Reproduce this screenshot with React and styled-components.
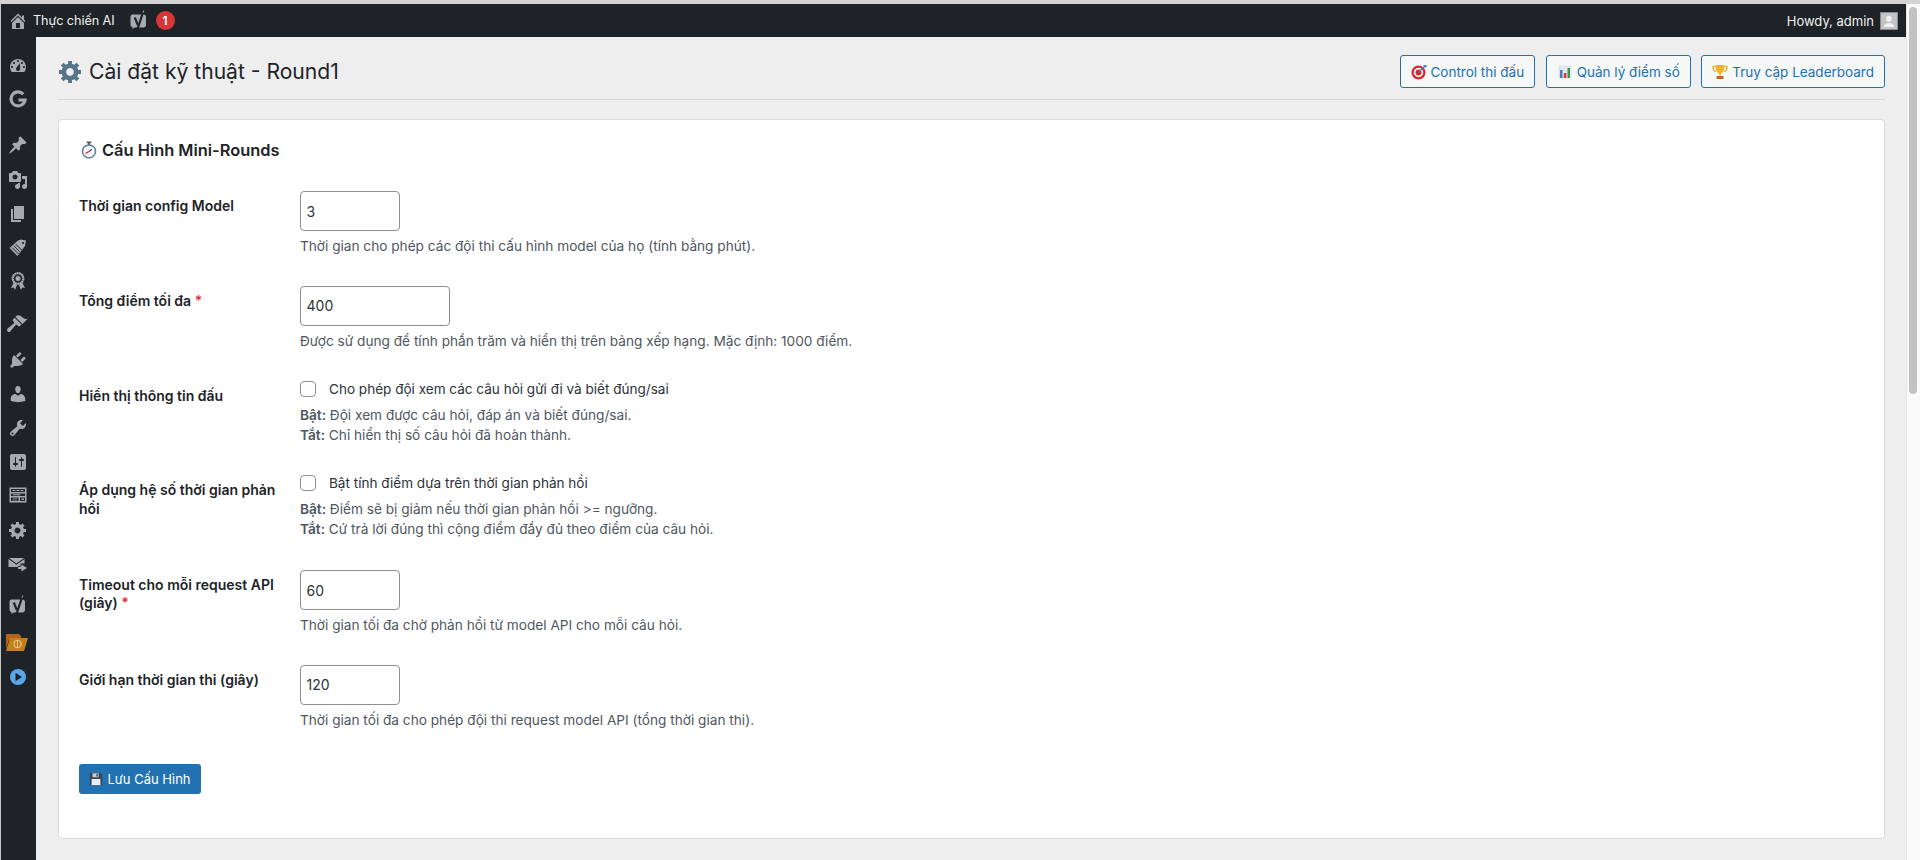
import React from 'react';
import styled, { createGlobalStyle } from 'styled-components';

const Global = createGlobalStyle`
  html, body { margin: 0; padding: 0; height: 100%; overflow: hidden; background: #eee; }
  body { font-family: Inter, "Noto Sans", sans-serif; color: #1d2327; }
  * { box-sizing: border-box; }
`;

const Shell = styled.div`
  width: 1920px; height: 860px; display: flex; overflow: hidden;
  background: #eeeeee; border-top: 4px solid #d4d4d4; border-left: 1px solid #c8c8c8;
`;
const Page = styled.div`flex: 1; min-width: 0; display: flex; flex-direction: column;`;
const AdminBar = styled.header`
  height: 33px; flex: none; background: #1d2327; color: #f0f0f1; display: flex; align-items: center;
  font-size: 13px; padding: 0 8px 0 7px;
`;
const BarLink = styled.span`display: flex; align-items: center; gap: 5px; font-size: 12.7px; letter-spacing: -0.1px;`;
const Yoast = styled.span`display: flex; align-items: center; margin-left: 14px; gap: 7px;`;
const Badge = styled.span`
  width: 19px; height: 19px; border-radius: 50%; background: #d63638; color: #fff; font-size: 12px; font-weight: 600;
  display: flex; align-items: center; justify-content: center;
`;
const Howdy = styled.span`margin-left: auto; display: flex; align-items: center; gap: 6px;`;
const Avatar = styled.span`
  width: 18px; height: 18px; background: #c3c4c7; border: 1px solid #888; display: block; overflow: hidden;
`;
const Body = styled.div`flex: 1; display: flex; min-height: 0;`;
const Side = styled.nav`
  width: 35px; flex: none; background: #1d2327; display: flex; flex-direction: column; align-items: center; padding-top: 19px;
`;
const SideIcon = styled.span`
  display: flex; width: 20px; height: 20px; align-items: center; justify-content: center; color: #a7aaad;
  margin-top: ${p => p.$gap}px;
  margin-left: -1px;
  svg { display: block; width: 20px; height: 20px; fill: currentColor; overflow: visible; }
`;
const Content = styled.main`flex: 1; min-width: 0; padding: 0 21px 0 22px;`;
const Head = styled.div`
  display: flex; align-items: center; height: 63px; padding-top: 7px; border-bottom: 1px solid #d5d6d8;
`;
const Title = styled.h1`
  margin: 0; font-size: 21.1px; font-weight: 400; line-height: 30px; display: flex; align-items: center; gap: 6px; color: #1d2327;
  svg { width: 26px; height: 26px; margin-left: -1px; }
`;
const Actions = styled.div`margin-left: auto; display: flex; gap: 10.5px;`;
const LinkButton = styled.a`
  height: 33px; padding: 0 10px 0 10px; display: flex; align-items: center; gap: 4px; font-size: 13.5px; color: #2271b1;
  border: 1px solid #2271b1; border-radius: 3px; background: #f6f7f7;
  svg { width: 16px; height: 16px; }
`;
const Card = styled.section`
  margin-top: 19px; height: 720px; background: #fff; border: 1px solid #dcdcde; border-radius: 4px;
  padding: 19px 20px 0 20px;
`;
const CardTitle = styled.h2`
  margin: 0 0 15px; font-size: 16.4px; font-weight: 600; line-height: 22px; display: flex; align-items: center; gap: 4px; color: #1d2327;
  padding-left: 1px; height: 22px;
  svg { width: 18px; height: 18px; }
`;
const Row = styled.div`
  display: grid; grid-template-columns: 221px 1fr; height: 94.75px; padding-top: 15px;
`;
const Label = styled.label`
  display: block; padding: 6px 10px 0 0; font-size: 14px; font-weight: 600; line-height: 18.4px; color: #1d2327;
`;
const Req = styled.span`color: #d63638;`;
const Input = styled.div`
  width: ${p => p.$w}px; height: 40px; border: 1px solid #8c8f94; border-radius: 4px; background: #fff;
  display: flex; align-items: center; padding: 0 5.5px; font-size: 14px; color: #2c3338;
`;
const Desc = styled.p`
  margin: ${p => p.$mt || 5}px 0 0; font-size: 13.65px; line-height: 20px; color: #50575e;
  strong { font-weight: 600; }
`;
const CheckRow = styled.div`display: flex; align-items: center; gap: 13px; font-size: 13.55px; line-height: 20px; height: 20px; color: #2c3338; margin-top: -2px;`;
const Check = styled.span`width: 16px; height: 16px; border: 1px solid #8c8f94; border-radius: 4px; background: #fff; display: block; flex: none;`;
const Save = styled.a`
  margin-top: 19px; height: 30px; width: 122px; background: #2271b1; color: #fff; border-radius: 3px; font-size: 13px;
  display: flex; align-items: center; justify-content: center; gap: 4px;
  svg { width: 14px; height: 14px; }
`;
const Scroll = styled.aside`
  width: 14px; flex: none; background: #fafafa; border-left: 1px solid #e6e6e6; padding: 3px 3px 0 2px;
`;
const Thumb = styled.div`height: 387px; border-radius: 5px; background: #c2c2c2;`;

const paths = {
  dash: 'M3.76 16h12.48c1.1-1.37 1.76-3.11 1.76-5 0-4.42-3.58-8-8-8s-8 3.58-8 8c0 1.89.66 3.63 1.76 5zM10 4c.55 0 1 .45 1 1s-.45 1-1 1-1-.45-1-1 .45-1 1-1zM6 6c.55 0 1 .45 1 1s-.45 1-1 1-1-.45-1-1 .45-1 1-1zm8 0c.55 0 1 .45 1 1s-.45 1-1 1-1-.45-1-1 .45-1 1-1zm-5.37 5.55L12 7v6c0 1.1-.9 2-2 2s-2-.9-2-2c0-.57.24-1.08.63-1.45zM4 10c.55 0 1 .45 1 1s-.45 1-1 1-1-.45-1-1 .45-1 1-1zm12 0c.55 0 1 .45 1 1s-.45 1-1 1-1-.45-1-1 .45-1 1-1z',
  pin: 'M10.44 3.02l1.82-1.82 6.36 6.35-1.83 1.82c-1.05-.68-2.48-.57-3.41.36l-.75.75c-.92.93-1.04 2.35-.35 3.41l-1.83 1.82-2.41-2.41-2.8 2.79c-.42.42-3.38 2.71-3.8 2.29s1.86-3.39 2.28-3.81l2.79-2.79L4.1 9.36l1.83-1.82c1.05.69 2.48.57 3.4-.36l.75-.75c.93-.92 1.05-2.35.36-3.41z',
  media: 'M13 11V4c0-.55-.45-1-1-1h-1.67L9 1H5L3.67 3H2c-.55 0-1 .45-1 1v7c0 .55.45 1 1 1h10c.55 0 1-.45 1-1zM7 4.5c1.38 0 2.5 1.12 2.5 2.5S8.38 9.5 7 9.5 4.5 8.38 4.5 7 5.62 4.5 7 4.5zM14 6h5v10.5c0 1.38-1.12 2.5-2.5 2.5S14 17.88 14 16.5s1.12-2.5 2.5-2.5c.17 0 .34.02.5.05V9h-3V6zm-4 8.05V13h2v3.5c0 1.38-1.12 2.5-2.5 2.5S7 17.88 7 16.5 8.12 14 9.5 14c.17 0 .34.02.5.05z',
  page: 'M6 15V2h10v13H6zm-1 1h8v2H3V5h2v11z',
  brush: 'M14.48 11.06L7.41 3.99l1.5-1.5c.5-.56 2.3-.47 3.51.32 1.21.8 1.43 1.28 2.91 2.1 1.18.64 2.45 1.26 4.45.85zm-.71.71L6.7 4.7 4.93 6.47c-.39.39-.39 1.02 0 1.41l1.06 1.06c.39.39.39 1.03 0 1.42-.6.6-6.4 5.31-6.4 5.31-.76.76-.76 2 0 2.76.75.76 1.99.76 2.76 0 0 0 4.7-5.8 5.31-6.41.39-.39 1.02-.39 1.41 0l1.06 1.06c.39.39 1.02.39 1.41 0z',
  plug: 'M13.11 4.36L9.87 7.6 8 5.73l3.24-3.24c.35-.34 1.05-.2 1.56.32.52.51.66 1.21.31 1.55zm-8 1.77l.91-1.12 9.01 9.01-1.19.84c-.71.71-2.63 1.16-3.82 1.16H6.14L4.9 17.26c-.59.59-1.54.59-2.12 0-.59-.58-.59-1.53 0-2.12l1.24-1.24v-3.88c0-1.13.4-3.19 1.09-3.89zm7.26 3.97l3.24-3.24c.34-.35 1.04-.21 1.55.31.52.51.66 1.21.31 1.55l-3.24 3.25z',
  user: 'M10 9.25c-2.27 0-2.73-3.44-2.73-3.44C7 4.02 7.82 2 9.97 2c2.16 0 2.98 2.02 2.71 3.81 0 0-.41 3.44-2.68 3.44zm0 2.57L12.72 10c2.39 0 4.52 2.33 4.52 4.53v2.49s-3.65 1.13-7.24 1.13c-3.65 0-7.24-1.13-7.24-1.13v-2.49c0-2.25 1.94-4.48 4.47-4.48z',
  tools: 'M16.68 9.77c-1.34 1.34-3.3 1.67-4.95.99l-5.41 6.52c-.99.99-2.59.99-3.58 0s-.99-2.59 0-3.57l6.52-5.42c-.68-1.65-.35-3.61.99-4.95 1.28-1.28 3.12-1.62 4.72-1.06l-2.89 2.89 2.82 2.82 2.86-2.87c.53 1.58.18 3.39-1.08 4.65zM3.81 16.21c.4.39 1.04.39 1.43 0 .4-.4.4-1.04 0-1.43-.39-.4-1.03-.4-1.43 0-.39.39-.39 1.03 0 1.43z',
  settings: 'M18 16V4c0-1.1-.9-2-2-2H4c-1.1 0-2 .9-2 2v12c0 1.1.9 2 2 2h12c1.1 0 2-.9 2-2zM8 11h1c.55 0 1 .45 1 1s-.45 1-1 1H8v1.5c0 .28-.22.5-.5.5s-.5-.22-.5-.5V13H6c-.55 0-1-.45-1-1s.45-1 1-1h1V5.5c0-.28.22-.5.5-.5s.5.22.5.5V11zm5-2h-1c-.55 0-1-.45-1-1s.45-1 1-1h1V5.5c0-.28.22-.5.5-.5s.5.22.5.5V7h1c.55 0 1 .45 1 1s-.45 1-1 1h-1v5.5c0 .28-.22.5-.5.5s-.5-.22-.5-.5V9z',
  gear: 'M18 12h-2.18c-.17.7-.44 1.35-.81 1.93l1.54 1.54-2.1 2.1-1.54-1.54c-.58.36-1.23.63-1.91.79V19H8v-2.18c-.68-.16-1.33-.43-1.91-.79l-1.54 1.54-2.12-2.12 1.54-1.54c-.36-.58-.63-1.23-.79-1.91H1V9.03h2.17c.16-.7.44-1.35.8-1.94L2.43 5.55l2.1-2.1 1.54 1.54c.58-.37 1.24-.64 1.93-.81V2h3v2.18c.68.16 1.33.43 1.91.79l1.54-1.54 2.12 2.12-1.54 1.54c.36.59.64 1.24.8 1.94H18V12zm-8.5 1.5c1.66 0 3-1.34 3-3s-1.34-3-3-3-3 1.34-3 3 1.34 3 3 3z',
  mail: 'M1 4h15L8.500 9.500zM.5 5l8 5.800L16.500 5v4.500h-4v3.500H.5zM13.500 10.500V12H10v3h3.500v2.500L19 14z',
  home: 'M16 8.5l1.53 1.53-1.06 1.06L10 4.62l-6.47 6.47-1.06-1.06L10 2.5l4 4v-2h2v4zm-6-2.46l6 5.99V18H4v-5.97zM12 17v-5H8v5h4z',
};
const Ico = ({ name }) => <svg viewBox="0 0 20 20"><path d={paths[name]} /></svg>;

const GIcon = () => (
  <svg viewBox="0 0 20 20"><path d="M15.300 5.200A7 7 0 1 0 17 11h-6.500" fill="none" stroke="currentColor" strokeWidth="3.100" /></svg>
);
const TagIcon = () => (
  <svg viewBox="0 0 20 20">
    <path d="M10 2.500l3-1 5 1-1 5.500-7.500 10L1.500 10z" />
    <path d="M7.600 6l6.500 6.500M5.900 7.800l6.500 6.500M4.200 9.600l6.500 6.500" stroke="#1d2327" strokeWidth="1" fill="none" />
    <circle cx="15" cy="5" r="1.100" fill="#1d2327" />
  </svg>
);
const AwardIcon = () => (
  <svg viewBox="0 0 20 20">
    <path d="M6 11l-3 6 2.800-.6L7 19l2-5zM14 11l3 6-2.800-.6L13 19l-2-5z" />
    <circle cx="10" cy="7.500" r="5.300" fill="none" stroke="currentColor" strokeWidth="2.200" strokeDasharray="2 .3" />
    <circle cx="10" cy="7.500" r="2.500" />
  </svg>
);
const TableIcon = () => (
  <svg viewBox="0 0 20 20">
    <path fillRule="evenodd" d="M1.500 2.500h17v15h-17zM3 4v3h14V4zM3 8.500V11h14V8.500zM3 12.500V16h7.500v-3.500zM12 12.500V16h5v-3.500z" />
    <path d="M4.500 5h3v1h-3zM8.500 5h3v1h-3zM12.500 5h3v1h-3zM4.500 9.200h8v1h-8zM4.500 13.500h4.500v.8H4.500zM4.500 14.900h4.500v.6H4.500zM13.500 13.500h2.500v1.500h-2.500z" />
  </svg>
);
const YoastIcon = ({ size = 20 }) => (
  <svg viewBox="0 0 20 20" width={size} height={size} style={{ display: 'block', width: size, height: size, overflow: 'visible' }}>
    <path fill="#a7aaad" d="M3.500 3.500h11c1.400 0 2.500 1.100 2.500 2.500v8c0 1.400-1.100 2.500-2.500 2.500H5.500L3.500 18v-1.800C2.200 15.800 1.500 14.800 1.500 13.500V6C1.500 4.600 2.300 3.500 3.500 3.500z" />
    <path fill="none" stroke="#1d2327" strokeWidth="2.200" d="M5.800 6.500l3 7.500M14.500 0L9 16.500c-.3 1-1.200 2-2.800 2.300" />
    <path fill="none" stroke="#a7aaad" strokeWidth="1" d="M14.800-.5l-.8 2.200" />
  </svg>
);
const FolderIcon = () => (
  <svg viewBox="0 0 24 20" style={{ width: 24, marginLeft: -2, flex: 'none' }}><path fill="#b5621f" d="M1 1h13l2 2v4H4L1 16z" /><path fill="#c47f1a" d="M5 5h18l-4 13H1z" /><circle cx="12.500" cy="11" r="3.600" fill="none" stroke="#e0c080" strokeWidth="1.400" /><path d="M12.500 7.500v7" stroke="#e0c080" strokeWidth="1" /></svg>
);
const PlayIcon = () => (
  <svg viewBox="0 0 20 20"><circle cx="10" cy="10" r="8" fill="#5aa6ea" /><path fill="#1d2327" d="M7.500 5.800l6.500 4.200-6.500 4.200z" /></svg>
);
const GearEmoji = () => <svg viewBox="0 0 20 20"><path fill="#56748a" d={paths.gear} transform="translate(.5 -.5)" /></svg>;
const Stopwatch = () => (
  <svg viewBox="0 0 16 16"><path fill="#556" d="M6 .5h4V2H6zM7.200 2h1.600v1.500H7.200z" /><circle cx="8" cy="9.300" r="5.800" fill="#f4f7fa" stroke="#5f7d96" strokeWidth="1.300" /><path d="M8 9.300L5 11" stroke="#d33" strokeWidth="1.100" /><path d="M8 9.300l2.500-2" stroke="#445" strokeWidth="1" /></svg>
);
const Target = () => (
  <svg viewBox="0 0 16 16"><circle cx="7.500" cy="8.500" r="7" fill="#d9272e" /><circle cx="7.500" cy="8.500" r="4.700" fill="#fff" /><circle cx="7.500" cy="8.500" r="3" fill="#d9272e" /><path d="M7.500 8.500L14 2" stroke="#3f7fc4" strokeWidth="1.200" /><path d="M12.500 1l.5 2 2 .5 1-2-2-.5z" fill="#3f7fc4" /></svg>
);
const Chart = () => (
  <svg viewBox="0 0 16 16"><rect x="1.500" y="1.500" width="13" height="13" fill="#dfe6ee" /><rect x="3" y="6" width="2.500" height="8" fill="#3d7fbf" /><rect x="6.800" y="9" width="2.500" height="5" fill="#d33" /><rect x="10.500" y="4" width="2.500" height="10" fill="#3a9a4a" /></svg>
);
const Trophy = () => (
  <svg viewBox="0 0 16 16"><path fill="none" stroke="#e0a21c" strokeWidth="1.200" d="M3.500 2.500H1c0 3 1 4.500 3 5M12.500 2.500H15c0 3-1 4.500-3 5" /><path fill="#f2b41f" d="M3.500 1h9c0 5-1.500 7.500-3.500 8.500v2H7v-2C5 8.500 3.500 6 3.500 1z" /><path fill="#c8641e" d="M4.500 12h7v3h-7z" /></svg>
);
const Floppy = () => (
  <svg viewBox="0 0 16 16"><path fill="#3a4652" d="M1 1h12l2 2v12H1z" /><rect x="4" y="1.500" width="7" height="4.500" fill="#c7cdd3" /><rect x="8.500" y="2.200" width="1.500" height="3" fill="#3a4652" /><rect x="3" y="8" width="10" height="7" fill="#e6edf5" /></svg>
);

const sideIcons = [
  [<Ico name="dash" />, 0], [<GIcon />, 12.7], [<Ico name="pin" />, 26.5], [<Ico name="media" />, 15], [<Ico name="page" />, 14],
  [<TagIcon />, 14], [<AwardIcon />, 13], [<Ico name="brush" />, 22], [<Ico name="plug" />, 17], [<Ico name="user" />, 14],
  [<Ico name="tools" />, 14], [<Ico name="settings" />, 14], [<TableIcon />, 13], [<Ico name="gear" />, 15], [<Ico name="mail" />, 14],
  [<YoastIcon size={20} />, 22], [<FolderIcon />, 17], [<PlayIcon />, 14],
];

const rows = [
  { label: <>Thời gian config Model</>, w: 100, value: '3', desc: 'Thời gian cho phép các đội thi cấu hình model của họ (tính bằng phút).' },
  { label: <>Tổng điểm tối đa <Req>*</Req></>, w: 150, value: '400', desc: 'Được sử dụng để tính phần trăm và hiển thị trên bảng xếp hạng. Mặc định: 1000 điểm.' },
  { label: <>Hiển thị thông tin đấu</>, check: 'Cho phép đội xem các câu hỏi gửi đi và biết đúng/sai', on: 'Đội xem được câu hỏi, đáp án và biết đúng/sai.', off: 'Chỉ hiển thị số câu hỏi đã hoàn thành.' },
  { label: <>Áp dụng hệ số thời gian phản hồi</>, check: 'Bật tính điểm dựa trên thời gian phản hồi', on: 'Điểm sẽ bị giảm nếu thời gian phản hồi >= ngưỡng.', off: 'Cứ trả lời đúng thì cộng điểm đầy đủ theo điểm của câu hỏi.' },
  { label: <>Timeout cho mỗi request API (giây) <Req>*</Req></>, w: 100, value: '60', desc: 'Thời gian tối đa chờ phản hồi từ model API cho mỗi câu hỏi.' },
  { label: <>Giới hạn thời gian thi (giây)</>, w: 100, value: '120', desc: 'Thời gian tối đa cho phép đội thi request model API (tổng thời gian thi).' },
];

export default function App() {
  return (
    <>
      <Global />
      <Shell>
        <Page>
          <AdminBar>
            <BarLink><svg viewBox="0 0 20 20" width="20" height="20" fill="#a7aaad"><path d={paths.home} /></svg>Thực chiến AI</BarLink>
            <Yoast><YoastIcon size={20} /><Badge>1</Badge></Yoast>
            <Howdy>Howdy, admin <Avatar><svg viewBox="0 0 17 17" width="16" height="16"><path fill="#f0f0f1" d="M8.500 3a3 3 0 0 1 3 3.500c0 1.500-1 3-3 3s-3-1.500-3-3A3 3 0 0 1 8.500 3zM3 15c0-2.500 2-4.500 5.500-4.500S14 12.500 14 15z" /></svg></Avatar></Howdy>
          </AdminBar>
          <Body>
            <Side>
              {sideIcons.map(([icon, g], i) => <SideIcon key={i} $gap={g}>{icon}</SideIcon>)}
            </Side>
            <Content>
              <Head>
                <Title><GearEmoji />Cài đặt kỹ thuật - Round1</Title>
                <Actions>
                  <LinkButton><Target />Control thi đấu</LinkButton>
                  <LinkButton><Chart />Quản lý điểm số</LinkButton>
                  <LinkButton><Trophy />Truy cập Leaderboard</LinkButton>
                </Actions>
              </Head>
              <Card>
                <CardTitle><Stopwatch />Cấu Hình Mini-Rounds</CardTitle>
                {rows.map((r, i) => (
                  <Row key={i}>
                    <Label>{r.label}</Label>
                    <div>
                      {r.check ? (
                        <>
                          <CheckRow><Check />{r.check}</CheckRow>
                          <Desc $mt={6}><strong>Bật:</strong> {r.on}<br /><strong>Tắt:</strong> {r.off}</Desc>
                        </>
                      ) : (
                        <>
                          <Input $w={r.w}>{r.value}</Input>
                          <Desc>{r.desc}</Desc>
                        </>
                      )}
                    </div>
                  </Row>
                ))}
                <Save><Floppy />Lưu Cấu Hình</Save>
              </Card>
            </Content>
          </Body>
        </Page>
        <Scroll><Thumb /></Scroll>
      </Shell>
    </>
  );
}
